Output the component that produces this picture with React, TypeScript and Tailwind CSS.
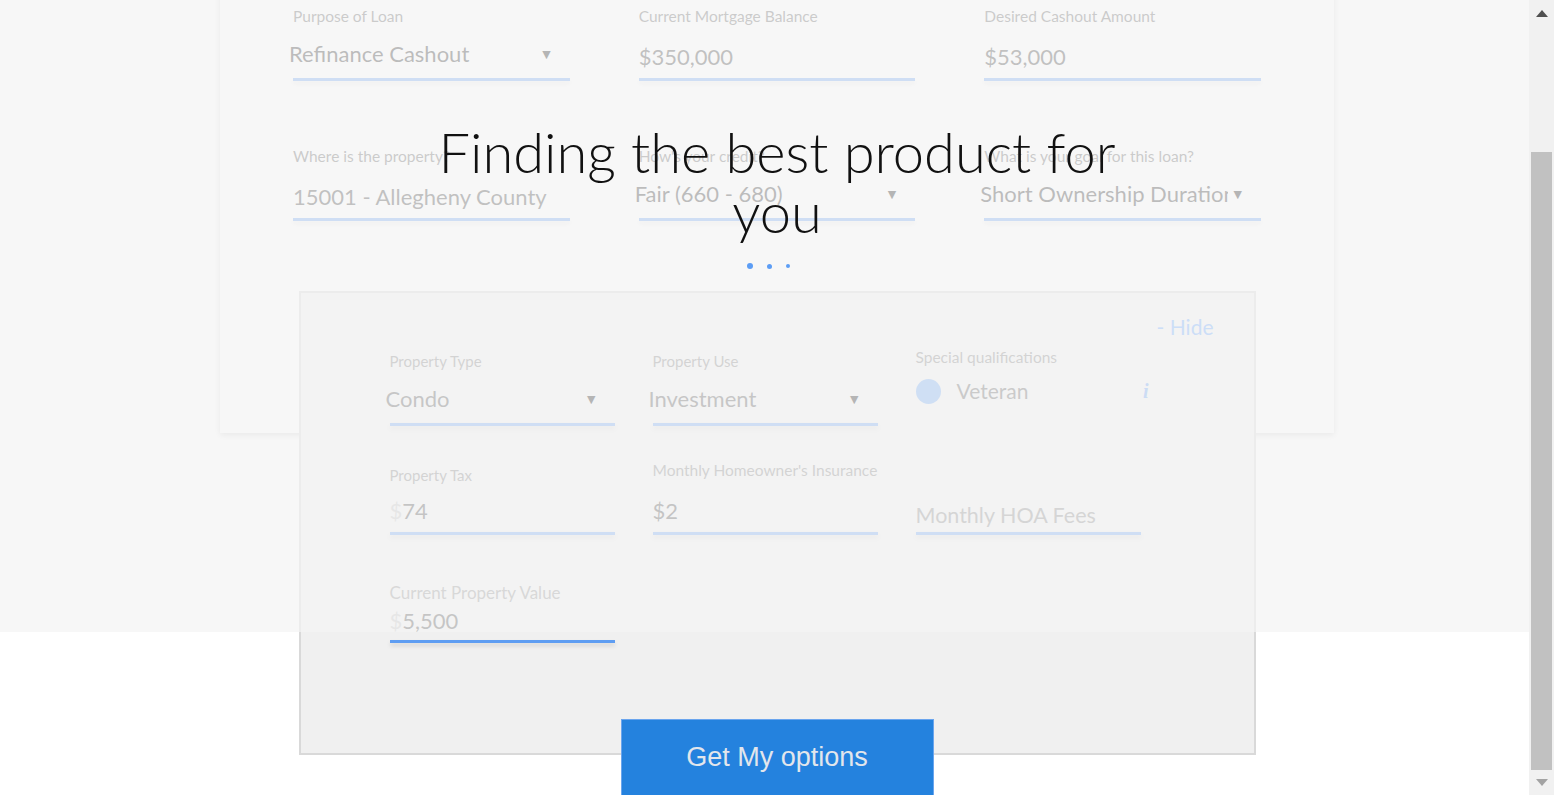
import React from "react";

const UL = "h-[3px] w-full bg-[#7aacf5] shadow-[0_3px_4px_rgba(0,0,0,0.1)]";

function Arrow() {
  return (
    <span className="ml-[6px] shrink-0 font-['DejaVu_Sans',sans-serif] text-[11px] leading-none text-[#222]">▼</span>
  );
}

function CardSelect({ label, value }: { label: string; value: string }) {
  return (
    <div className="flex flex-col">
      <div className="text-[15.5px] leading-[20px] text-[#6c6c6c] whitespace-nowrap">{label}</div>
      <div className="mt-[13px] flex h-[30px] items-center -ml-[4px] pr-[19px]">
        <span className="min-w-0 flex-1 overflow-hidden whitespace-nowrap text-[22px] leading-[30px] text-[#3a3a3a]">{value}</span>
        <Arrow />
      </div>
      <div className={"mt-[9px] " + UL} />
    </div>
  );
}

function CardInput({ label, value }: { label: string; value: string }) {
  return (
    <div className="flex flex-col">
      <div className="text-[15.5px] leading-[20px] text-[#6c6c6c] whitespace-nowrap">{label}</div>
      <div className="mt-[13px] h-[30px] pt-[3px] text-[22px] leading-[30px] text-[#4a4a4a] whitespace-nowrap">{value}</div>
      <div className={"mt-[9px] " + UL} />
    </div>
  );
}

function PanelSelect({ label, value }: { label: string; value: string }) {
  return (
    <div className="flex flex-col">
      <div className="text-[15px] leading-[20px] text-[#878787] whitespace-nowrap">{label}</div>
      <div className="mt-[13px] flex h-[30px] items-center -ml-[4px] pr-[19px]">
        <span className="min-w-0 flex-1 overflow-hidden whitespace-nowrap text-[22px] leading-[30px] text-[#5c5c5c]">{value}</span>
        <Arrow />
      </div>
      <div className={"mt-[9px] " + UL} />
    </div>
  );
}

export default function App() {
  return (
    <div className="relative h-[795px] w-full overflow-hidden bg-white font-['Lato',sans-serif]">
      {/* page content */}
      <div className="flex flex-col items-center">
        {/* main card */}
        <div className="-mt-[20px] w-[1114px] bg-white px-[73px] pt-[26px] pb-[212px] shadow-[0_2px_6px_rgba(0,0,0,0.18)]">
          <div className="grid grid-cols-3 gap-x-[69px]">
            <CardSelect label="Purpose of Loan" value="Refinance Cashout" />
            <CardInput label="Current Mortgage Balance" value="$350,000" />
            <CardInput label="Desired Cashout Amount" value="$53,000" />
          </div>
          <div className="mt-[65px] grid grid-cols-3 gap-x-[69px]">
            <CardInput label="Where is the property?" value="15001 - Allegheny County" />
            <CardSelect label="How's your credit?" value="Fair (660 - 680)" />
            <CardSelect label="What is your goal for this loan?" value="Short Ownership Duration" />
          </div>
        </div>

        {/* more options panel */}
        <div className="relative z-10 -mt-[142px] flex h-[464px] w-[957px] flex-col border-2 border-[#d9d9d9] bg-[#f0f0f0] pl-[89px] pr-[40px] pt-[19px]">
          <div className="flex justify-end text-[21px] leading-[30px] text-[#6eaaff]">- Hide</div>

          <div className="mt-[9px] grid w-[751px] grid-cols-3 gap-x-[38px]">
            <PanelSelect label="Property Type" value="Condo" />
            <PanelSelect label="Property Use" value="Investment" />
            <div className="flex flex-col">
              <div className="-mt-[4px] text-[15.5px] leading-[20px] text-[#878787] whitespace-nowrap">Special qualifications</div>
              <div className="mt-[9px] flex h-[30px] w-[233px] items-center">
                <span className="h-[25px] w-[25px] shrink-0 rounded-full bg-[#7aaef5]" />
                <span className="ml-[16px] text-[21px] leading-[30px] text-[#6a6a6a]">Veteran</span>
                <span className="ml-auto font-['Liberation_Serif',serif] text-[20px] font-bold italic leading-[30px] text-[#6ea6f5]">i</span>
              </div>
            </div>
          </div>

          <div className="mt-[39px] grid w-[751px] grid-cols-3 gap-x-[38px]">
            <div className="flex flex-col">
              <div className="text-[15px] leading-[20px] text-[#878787]">Property Tax</div>
              <div className="mt-[8px] h-[30px] pt-[3px] text-[22px] leading-[30px] text-[#555]">
                <span className="text-[#c6c6c6]">$</span>74
              </div>
              <div className={"mt-[9px] " + UL} />
            </div>
            <div className="flex flex-col">
              <div className="-mt-[5px] mb-[5px] text-[15.5px] leading-[20px] text-[#878787] whitespace-nowrap">Monthly Homeowner's Insurance</div>
              <div className="mt-[8px] h-[30px] pt-[3px] text-[22px] leading-[30px] text-[#555]">$2</div>
              <div className={"mt-[9px] " + UL} />
            </div>
            <div className="flex flex-col">
              <div className="h-[20px]" />
              <div className="mt-[8px] h-[30px] pt-[7px] text-[21.5px] leading-[30px] text-[#8d8d8d] whitespace-nowrap">Monthly HOA Fees</div>
              <div className={"mt-[9px] " + UL} />
            </div>
          </div>

          <div className="mt-[48px] grid w-[751px] grid-cols-3 gap-x-[38px]">
            <div className="flex flex-col">
              <div className="text-[17px] leading-[20px] text-[#979797] whitespace-nowrap">Current Property Value</div>
              <div className="h-[30px] pt-[3px] text-[22px] leading-[30px] text-[#595959]">
                <span className="text-[#c6c6c6]">$</span>5,500
              </div>
              <div className="mt-[7px] h-[3px] w-full bg-[#5e9df2] shadow-[0_3px_4px_rgba(0,0,0,0.12)]" />
            </div>
          </div>
        </div>

        {/* button */}
        <button className="relative z-10 -mt-[36px] flex h-[82px] w-[313px] justify-center border border-[#6aa5ee] bg-[#2482de] pt-[22px] font-['Liberation_Sans',Arial,sans-serif] text-[27px] leading-[30px] text-[#e2e6ec]">
          Get My options
        </button>
      </div>

      {/* loading overlay */}
      <div className="absolute left-0 right-0 top-0 z-20 flex h-[632px] flex-col items-center bg-[rgba(244,244,244,0.7)] pt-[122px]">
        <div className="w-[720px] text-center text-[56px] font-light leading-[60px] text-[#111]">Finding the best product for you</div>
        <div className="mt-[21px] flex items-center gap-[14px] pr-[18px]">
          <span className="h-[6px] w-[6px] rounded-full bg-[#5c9df5]" />
          <span className="h-[5px] w-[5px] rounded-full bg-[#5c9df5]" />
          <span className="h-[4px] w-[4px] rounded-full bg-[#5c9df5]" />
        </div>
      </div>

      {/* scrollbar */}
      <div className="absolute bottom-0 right-0 top-0 z-30 flex w-[25px] flex-col bg-[#f1f1f1]">
        <div className="flex h-[152px] justify-center pt-[10px]">
          <svg width="12" height="7" viewBox="0 0 12 7">
            <path d="M6 0 L12 7 L0 7 Z" fill="#505050" />
          </svg>
        </div>
        <div className="mx-[2px] flex-1 bg-[#c1c1c1]" />
        <div className="flex h-[25px] justify-center pt-[9px]">
          <svg width="12" height="7" viewBox="0 0 12 7">
            <path d="M0 0 L12 0 L6 7 Z" fill="#a3a3a3" />
          </svg>
        </div>
      </div>
    </div>
  );
}
